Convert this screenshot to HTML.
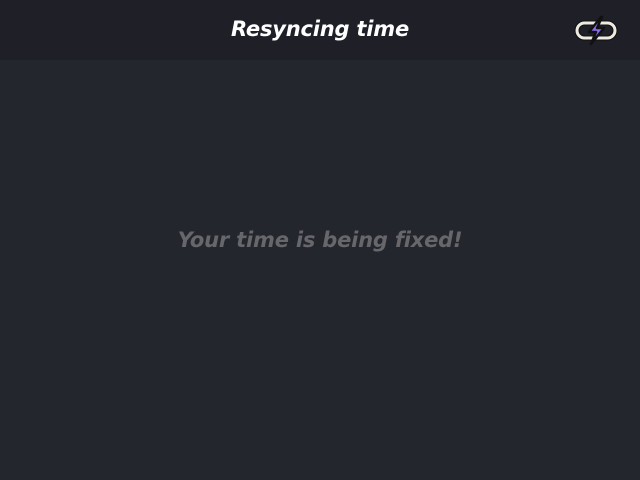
<!DOCTYPE html>
<html><head><style>
body{margin:0;width:640px;height:480px;background:#24262e;font-family:"DejaVu Sans","Liberation Sans",sans-serif;overflow:hidden;position:relative}
.h{position:absolute;left:0;top:0;width:640px;height:60px;background:#1e1f27}
.t{position:absolute;left:0;width:640px;text-align:center;font-weight:bold;font-style:italic;letter-spacing:-0.2px}
</style></head><body>
<div class="h"></div>
<div class="t" style="top:17px;color:#fff;font-size:21px">Resyncing time</div>
<div class="t" style="top:228px;color:#66666b;font-size:21px">Your time is being fixed!</div>
<svg style="position:absolute;left:572px;top:15px" width="48" height="32" viewBox="0 0 48 32">
<rect x="5" y="8" width="38" height="15" rx="7.5" fill="none" stroke="#111" stroke-width="5"/>
<rect x="5" y="8" width="38" height="15" rx="7.5" fill="none" stroke="#eeeae2" stroke-width="3"/>
<path d="M29 2 L17 17 L24 17 L19 29 L32 13 L25 13 L30 2 Z" fill="#8b6cf0" stroke="#111" stroke-width="2.5" stroke-linejoin="round"/>
</svg>
</body></html>
